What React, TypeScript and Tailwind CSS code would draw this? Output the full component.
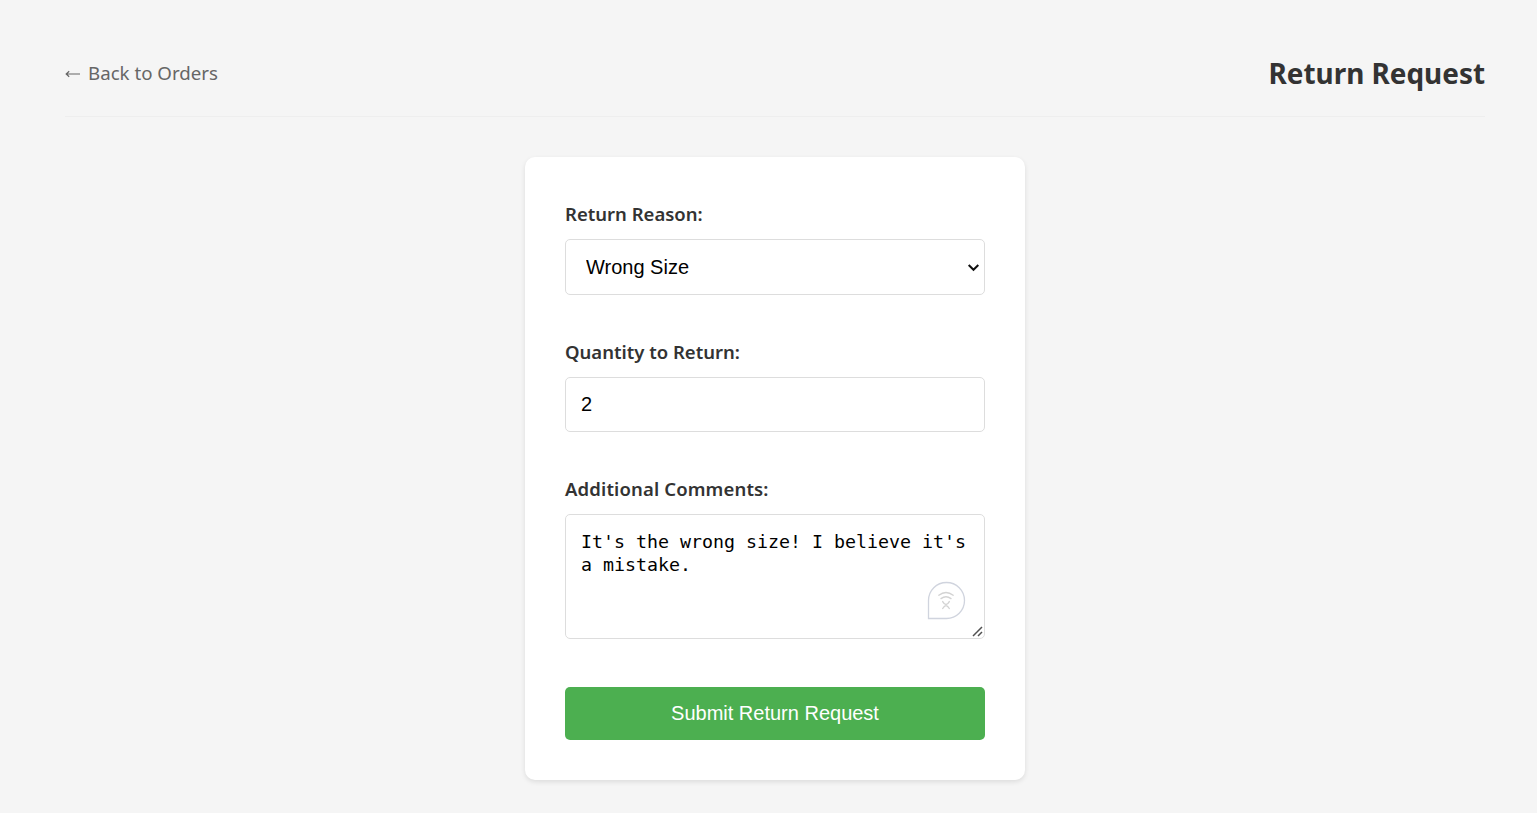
import React from "react";

const label = "block h-[26px] whitespace-nowrap font-['Noto_Sans','Open_Sans',sans-serif] text-[18.5px] font-semibold leading-[26px] text-[#333]";
const field = "block w-full rounded-[5px] border border-[#ddd] bg-white text-black outline-none";
const arial = "font-['Liberation_Sans',Arial,sans-serif] text-[20px]";

function SelectArrow() {
  return (
    <svg className="pointer-events-none absolute right-[5px] top-[24px]" width="13" height="9" viewBox="0 0 13 9" fill="none">
      <path d="M1.7 2 6.5 6.8 11.3 2" stroke="#101010" strokeWidth="2" />
    </svg>
  );
}

function OfflineBadge() {
  return (
    <svg className="absolute right-[19px] top-[67px]" width="39" height="39" viewBox="0 0 39 39" fill="none">
      <path d="M1.5 37.5V19.5A18 18 0 1 1 19.5 37.5Z" stroke="#d0d4de" strokeWidth="1.3" />
      <g stroke="#d3d3d3" strokeWidth="1.4" strokeLinecap="round">
        <path d="M11.8 14.2Q19 8.8 26.2 14.2" />
        <path d="M14 17.6Q19 14 24 17.6" />
        <path d="M15.7 20.6Q19 26.4 22.3 20.6" />
        <path d="M15.7 27.5Q19 21.7 22.3 27.5" />
      </g>
    </svg>
  );
}

function ResizeHandle() {
  return (
    <svg className="absolute bottom-[2px] right-[2px]" width="11" height="11" viewBox="0 0 11 11" fill="none">
      <path d="M1 10 10 1M6 10 10 6" stroke="#505050" strokeWidth="1.5" />
    </svg>
  );
}

export default function App() {
  return (
    <main className="h-[813px] overflow-hidden bg-[#f5f5f5] pl-[65px] pr-[52px] pt-[50px]">
      <header className="flex h-[67px] items-start justify-between border-b border-[#eee] font-['Noto_Sans','Open_Sans',sans-serif]">
        <a href="#" className="flex h-[46px] items-center gap-[7px] whitespace-nowrap text-[18.7px] text-[#666]">
          <svg className="mt-[2px]" width="16" height="10" viewBox="0 0 16 10" fill="none" aria-hidden="true">
            <path d="M15 5H1.5M4.2 2.3 1.2 5 4.2 7.7" stroke="#666" strokeWidth="1.2" />
          </svg>
          <span>Back to Orders</span>
        </a>
        <h1 className="whitespace-nowrap text-[27.9px] font-bold leading-[46px] text-[#333]">Return Request</h1>
      </header>

      <form
        className="mx-auto mt-10 h-[623px] w-[500px] rounded-[10px] bg-white px-10 pt-11 shadow-[0_2px_5px_rgba(0,0,0,0.1)]"
        onSubmit={(e) => e.preventDefault()}
      >
        <label className={label} htmlFor="reason">Return Reason:</label>
        <div className="relative mt-3">
          <select id="reason" className={`${field} ${arial} h-14 appearance-none px-5`} defaultValue="Wrong Size">
            <option>Wrong Size</option>
            <option>Damaged Item</option>
            <option>Other</option>
          </select>
          <SelectArrow />
        </div>

        <label className={`${label} mt-11`} htmlFor="quantity">Quantity to Return:</label>
        <input id="quantity" className={`${field} ${arial} mt-3 h-[55px] px-[15px]`} defaultValue="2" />

        <label className={`${label} mt-11 tracking-[0.14px]`} htmlFor="comments">Additional Comments:</label>
        <div className="relative mt-3">
          <textarea
            id="comments"
            spellCheck={false}
            className={`${field} h-[125px] resize-none overflow-hidden px-[15px] py-[15px] font-['DejaVu_Sans_Mono',monospace] text-[18.27px] leading-[23px]`}
            defaultValue="It's the wrong size! I believe it's a mistake."
          />
          <OfflineBadge />
          <ResizeHandle />
        </div>

        <button type="submit" className={`${arial} mt-12 block h-[53px] w-full rounded-[5px] bg-[#4caf50] pb-[2px] text-white`}>
          Submit Return Request
        </button>
      </form>
    </main>
  );
}
